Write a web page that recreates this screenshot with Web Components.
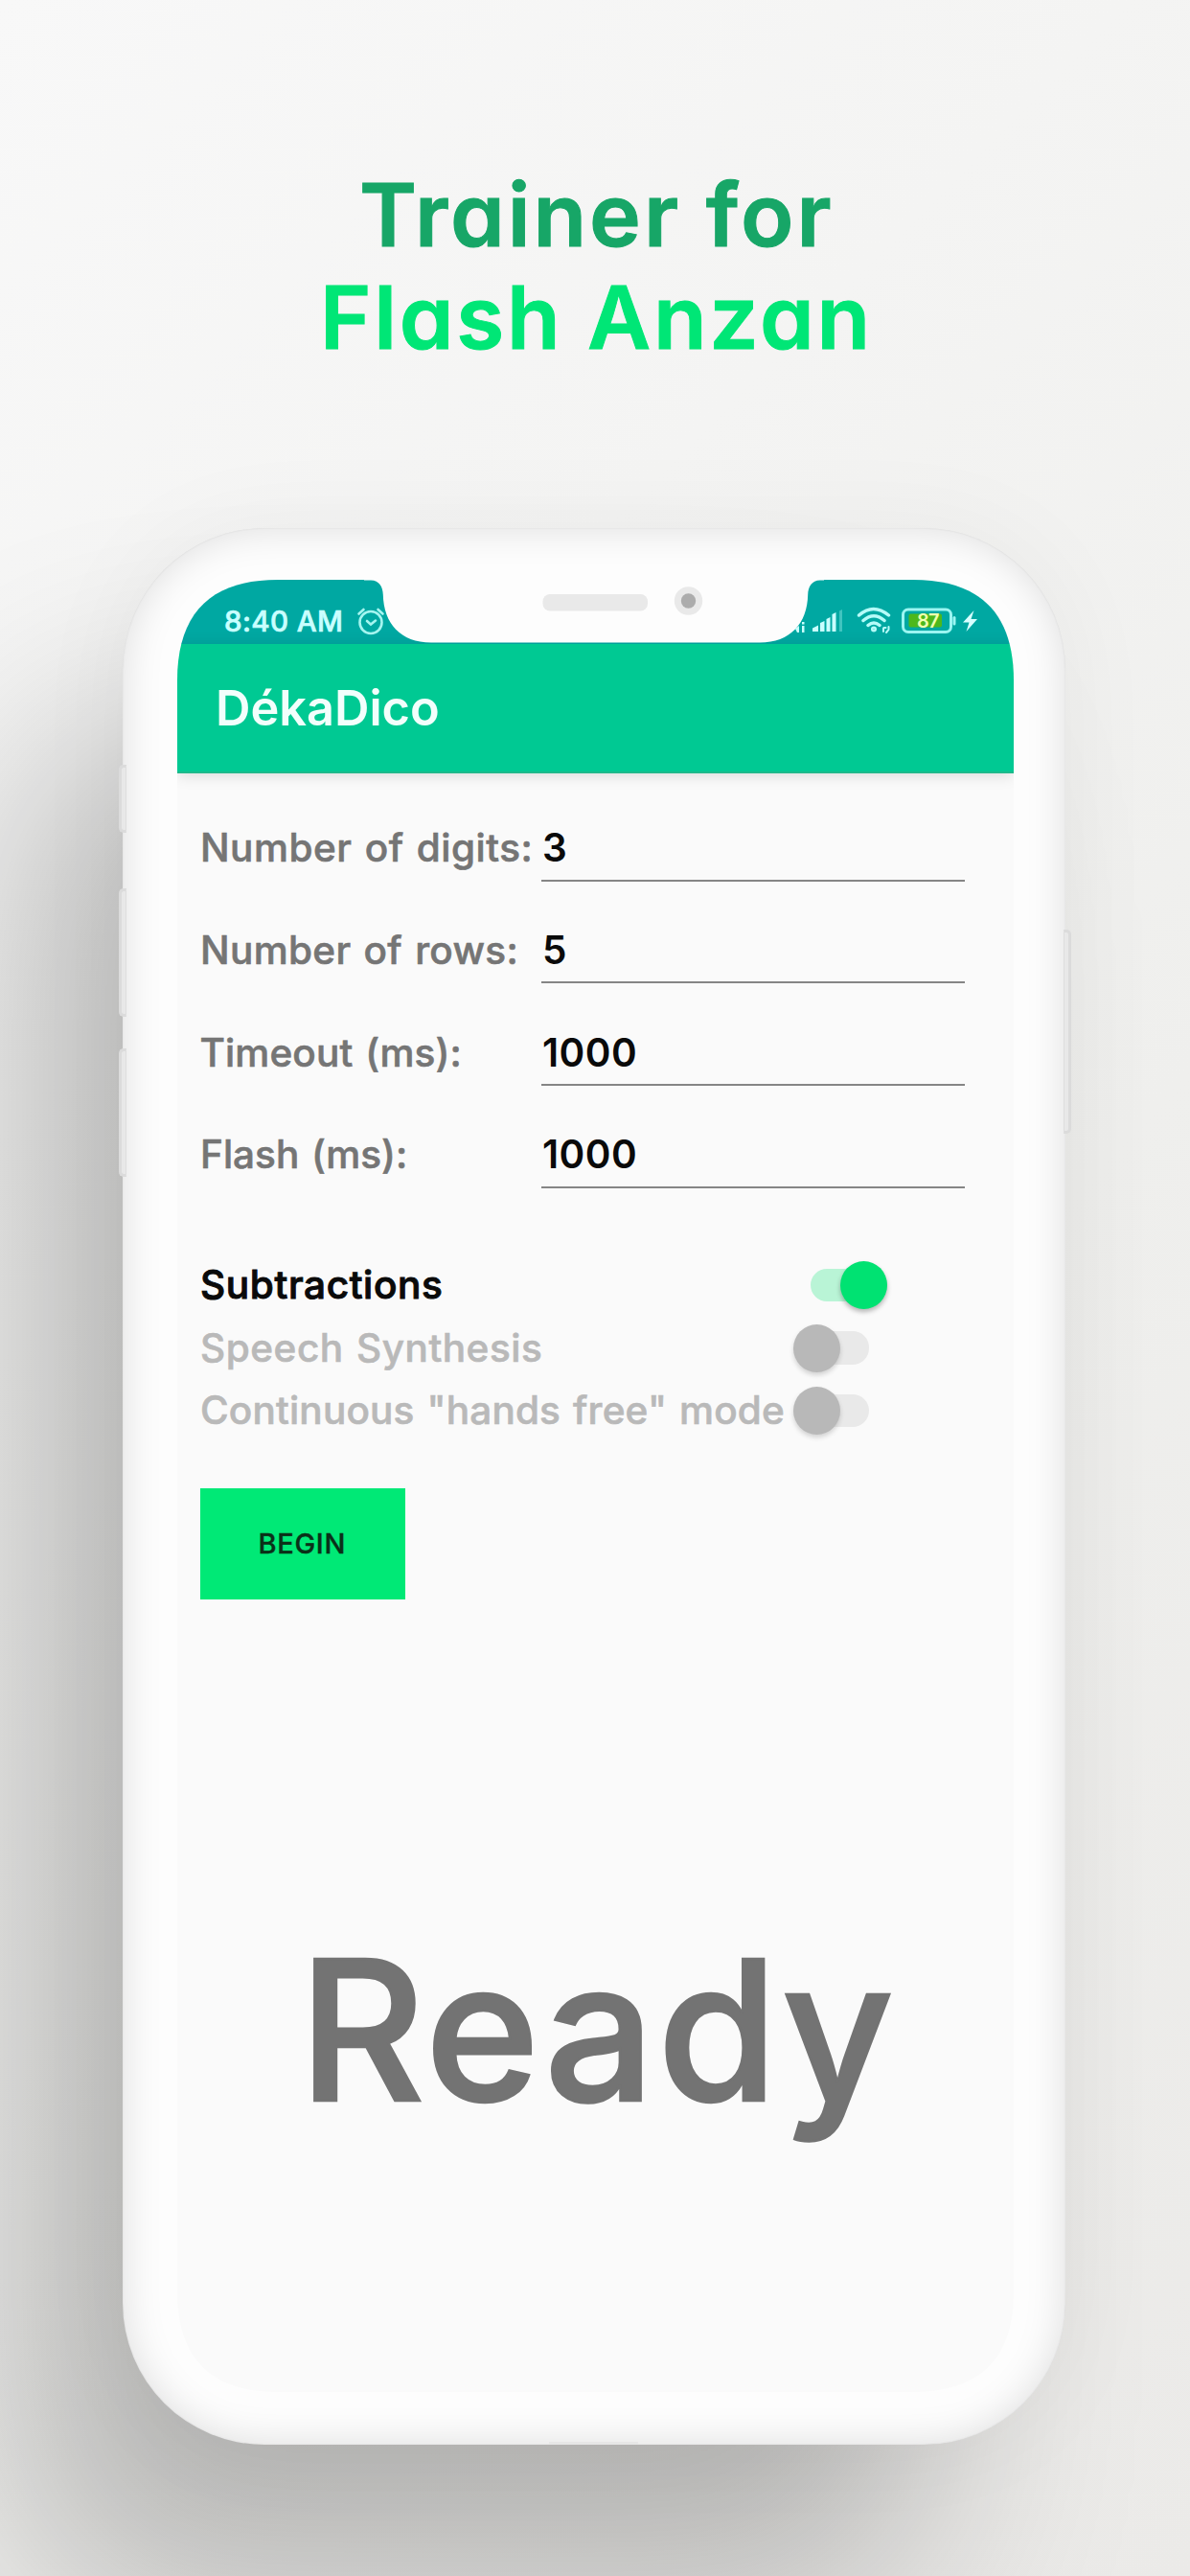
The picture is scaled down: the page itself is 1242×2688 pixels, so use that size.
<!DOCTYPE html>
<html lang="en">
<head>
<meta charset="utf-8">
<title>DékaDico – Trainer for Flash Anzan</title>
<style>
html,body{margin:0;padding:0}
body{width:1242px;height:2688px;overflow:hidden;font-family:Inter,"Liberation Sans",sans-serif}
</style>
</head>
<body>
<promo-page></promo-page>
<script>
const define=(name,html,setup)=>customElements.define(name,class extends HTMLElement{
  constructor(){super();this.attachShadow({mode:'open'});}
  connectedCallback(){this.shadowRoot.innerHTML=html;if(setup)setup(this,this.shadowRoot);}
});

/* Text whose tracking is set so that its ink spans exactly "w" pixels. */
const ctx=document.createElement('canvas').getContext('2d');
define('fit-text','<style>:host{display:block;white-space:pre;flex:none}</style><slot></slot>',el=>{
  const n=(k,d)=>+(el.getAttribute(k)||d);
  const s=n('size',16),wt=n('weight',500),w=n('w',0),ws=n('ws',0),dx=n('dx',0),st=n('stroke',0);
  const t=el.textContent;
  ctx.font=`${wt} ${s}px Inter`;
  const m=ctx.measureText(t),ink=m.actualBoundingBoxRight+m.actualBoundingBoxLeft;
  el.style.fontSize=s+'px';el.style.fontWeight=wt;
  el.style.wordSpacing=ws+'px';
  if(st)el.style.webkitTextStroke=st+'px currentColor';
  const ls=t.length>1?(w-ink-ws*(t.split(' ').length-1))/(t.length-1):0;
  el.style.letterSpacing=ls+'px';
  el.style.marginLeft=(m.actualBoundingBoxLeft+dx)+'px';
});

define('promo-heading',`<style>
:host{display:flex;flex-direction:column;padding-top:170.5px;line-height:107px;font-feature-settings:"cv11"}
.a{color:#17a667;padding-left:378px}.b{color:#00e676;padding-left:340px}
</style><div class="a"><fit-text size="91" weight="600" w="485" stroke="1">Trainer for</fit-text></div>
<div class="b"><fit-text size="91" weight="600" w="555" stroke="1">Flash Anzan</fit-text></div>`);

define('status-bar',`<style>
:host{display:flex;align-items:center;height:67px;box-sizing:border-box;padding:19px 38px 0 50px;background:#00a8a2;color:#c9ffff;line-height:30px}
.gap{flex:1}svg{display:block;flex:none}
.batt{position:relative;width:57px;height:28px;margin:0 7px 0 10px}
.batt fit-text{position:absolute;left:17px;top:0;line-height:28px;color:#efffb0}
</style>
<fit-text size="29.5" weight="500" w="121" stroke=".7">8:40 AM</fit-text>
<svg style="margin-left:14px" width="30" height="30" viewBox="0 0 30 30" fill="none" stroke="#a5f5f0" stroke-width="2.6" stroke-linecap="round"><circle cx="15" cy="16.5" r="11.5"/><path d="M11 15l4 3.6 5-4M2.5 7.5l5-4.5M27.5 7.5l-5-4.5"/></svg>
<div class="gap"></div>
<svg width="56" height="30" viewBox="824 634 56 30" fill="#c9ffff"><path d="M829 657l4-3v7h-2zM836 654h2.500v7h-2.500zM836 650h2.500v2.500h-2.500zM847 660v-3.500l6-3v6.500zM855 651l4.500-2v11h-4.500zM861.500 647l4-2v15h-4zM867.500 642l4-2v20h-4z"/><path fill="#7fe0dc" d="M875 638.500l3-1.500v23h-3z" opacity=".5"/></svg>
<svg style="margin-left:13px" width="37" height="30" viewBox="0 0 37 30" fill="none" stroke="#b5fbf8" stroke-width="3.500" stroke-linecap="round"><path d="M2.500 9q15-13 31 0M7 14.500q11-9.500 22 0M12 19.500q6-5 12 0"/><circle cx="18" cy="23.500" r="1.300"/><path stroke-width="2" d="M28 22.500v3.500M28.500 22h2M33.500 21v3l-2.500 3"/></svg>
<div class="batt"><svg width="57" height="28" viewBox="0 0 57 28"><rect x="1.500" y="2" width="50" height="23.500" rx="5.500" fill="none" stroke="#9cf6f2" stroke-width="3"/><rect x="7.500" y="6.500" width="34.500" height="14" rx="2" fill="#4db81c"/><path d="M55 10.500v6.500" stroke="#9cf6f2" stroke-width="3" stroke-linecap="round"/></svg><fit-text size="20" weight="600" w="22">87</fit-text></div>
<svg width="15" height="24" viewBox="0 0 15 24"><path d="M11.500 1L0 13.500h6.500L3.500 23 15 10H8.500z" fill="#d8ffff"/></svg>`);

define('app-bar','',(el,r)=>{
  r.innerHTML=`<style>
:host{display:flex;align-items:center;height:135px;box-sizing:border-box;border-bottom:2px solid #1fb98b;padding:1px 0 0 42px;background:#00c993;color:#f2fffc;line-height:60px;box-shadow:0 2px 15px rgba(0,0,0,.13);position:relative}
</style><fit-text size="50.5" weight="600" w="229" dx="1">${el.getAttribute('heading')}</fit-text>`;
});

define('form-row','',(el,r)=>{
  const g=n=>el.getAttribute(n);
  r.innerHTML=`<style>:host{display:flex;height:106.67px;line-height:50px}
.l{box-sizing:border-box;width:356px;padding:47.3px 0 0 2px;color:#757575}
.v{box-sizing:border-box;width:441.5px;padding:47.3px 0 0 ${g('vp')||2}px;color:#0a0a0a;border-bottom:2.6px solid #858585}
</style><div class="l"><fit-text size="40.5" weight="500" ws="2" w="${g('lw')}" dx="${g('dx')}" stroke=".6">${g('label')}</fit-text></div>
<div class="v"><fit-text size="40.5" weight="600" w="${g('vw')}">${g('value')}</fit-text></div>`;
});

define('switch-row','',(el,r)=>{
  const g=n=>el.getAttribute(n),on=el.hasAttribute('on');
  r.innerHTML=`<style>:host{display:flex;align-items:center;height:65.6px;line-height:50px;color:${on?'#0a0a0a':'#b9b9b9'}}
.l{box-sizing:border-box;width:${on?636.5:618.5}px;padding-left:2px}
.s{display:flex;align-items:center;justify-content:${on?'flex-end':'flex-start'};width:80px;height:49px}
.t{width:${on?80:60}px;height:34.5px;border-radius:17px;background:${on?'#b9f4d6':'#e9e9e9'};display:flex;align-items:center;justify-content:${on?'flex-end':'flex-start'};margin-left:${on?0:19}px}
.k{width:49px;height:50px;border-radius:50%;background:${on?'#00e272':'#b8b8b8'};box-shadow:0 3px 5px rgba(0,0,0,${on?.28:.16});margin-left:${on?0:-19}px;flex:none}
</style><div class="l"><fit-text size="40.5" weight="500" ws="2" w="${g('lw')}" stroke="${on?1:.6}"></fit-text></div><div class="s"><div class="t"><div class="k"></div></div></div>`;
  const old=r.querySelector('fit-text'),n=old.cloneNode();n.textContent=g('label');old.replaceWith(n);
});

define('action-button',`<style>
:host{display:flex;width:213.500px;height:116.300px;margin-top:47.700px;background:#00e976;color:#0b3018;align-items:center;justify-content:center;line-height:40px}
</style><fit-text size="29" weight="500" w="87" dx="1" stroke=".4">BEGIN</fit-text>`);

define('result-text',`<style>
:host{display:block;margin-top:329.400px;padding-left:119px;line-height:240px;color:#737373}
</style><fit-text size="203" weight="500" w="601" stroke="2.500">Ready</fit-text>`);

define('app-screen',`<style>
:host{display:flex;flex-direction:column;width:873px;height:1891px;background:#fafafa;
clip-path:path("M0 105C0 35 35 0 105 0H768C838 0 873 35 873 105V1786C873 1856 838 1891 768 1891H105C35 1891 0 1856 0 1786Z")}
main{padding:6px 0 0 24px}
.sw{padding-top:68.500px}
</style>
<status-bar></status-bar>
<app-bar heading="DékaDico"></app-bar>
<main>
<form-row label="Number of digits:" lw="341.500" dx="1" value="3" vw="22" vp="3"></form-row>
<form-row label="Number of rows:" lw="326.500" dx="1" value="5" vw="22" vp="3"></form-row>
<form-row label="Timeout (ms):" lw="270" dx="-1.5" value="1000" vw="96"></form-row>
<form-row label="Flash (ms):" lw="211" dx="1" value="1000" vw="96"></form-row>
<div class="sw">
<switch-row on label="Subtractions" lw="249"></switch-row>
<switch-row label="Speech Synthesis" lw="353"></switch-row>
<switch-row label='Continuous "hands free" mode' lw="606"></switch-row>
</div>
<action-button></action-button>
<result-text></result-text>
</main>`);

define('phone-frame',`<style>
:host{display:block;position:relative;box-sizing:border-box;width:984px;height:2000px;margin:166px 0 0 128px;padding:54.500px 0 0 57px;border-radius:148px;background:#fdfdfd;
box-shadow:-130px 185px 230px -20px rgba(0,0,0,.245),0 0 110px rgba(0,0,0,.045)}
.edge{position:absolute;inset:0;border-radius:148px;box-shadow:inset 0 0 42px rgba(0,0,0,.13),inset 0 0 2px rgba(0,0,0,.1);pointer-events:none}
.notch{position:absolute;left:252px;top:50px}
.key{position:absolute;box-sizing:border-box;width:8px;background:#e8e8e8;border:3px solid #dbdbdb}
.l{left:-4px;border-right:1px solid #dedede;border-radius:5px 0 0 5px}
.r{left:982px;border-left:1px solid #dedede;border-radius:0 5px 5px 0}
.port{position:absolute;left:445px;bottom:0;width:93px;height:2.500px;background:#e6e6e6}
</style>
<div class="edge"></div>
<slot></slot>
<svg class="notch" width="480" height="75" viewBox="380 600.500 480 75"><path fill="#fdfdfd" d="M380 600H862V605H856C847 605 843.500 612 843.200 620C842.500 650 825 670 793 670H450C418 670 400.500 650 399.800 620C399.500 612 396 605 387 605H380Z"/><rect x="566.500" y="619.500" width="109.500" height="17.500" rx="7.500" fill="#e9e9e9"/><circle cx="718.500" cy="626.500" r="14.700" fill="#e9e9e9"/><circle cx="718.500" cy="626.500" r="7.700" fill="#acacac"/></svg>
<div class="key l" style="top:247.500px;height:71px"></div>
<div class="key l" style="top:376.500px;height:134px"></div>
<div class="key l" style="top:543px;height:134px"></div>
<div class="key r" style="top:419.500px;height:213px"></div>
<div class="port"></div>`);

define('promo-page',`<style>
:host{display:block;width:1242px;height:2688px;overflow:hidden;background:linear-gradient(135deg,#f8f8f8 0%,#f4f4f3 30%,#efefed 60%,#ebeae8 100%)}
</style><promo-heading></promo-heading><phone-frame><app-screen></app-screen></phone-frame>`);
</script>
</body>
</html>
